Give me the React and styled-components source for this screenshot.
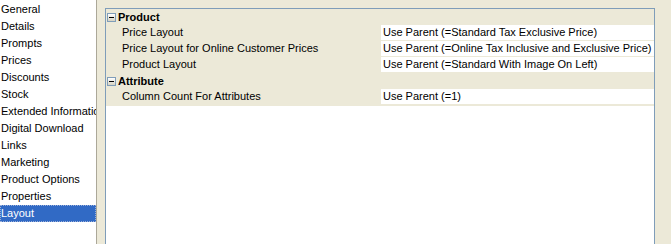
import { createGlobalStyle } from 'styled-components';
import styled from 'styled-components';

const GlobalStyle = createGlobalStyle`
  html, body {
    margin: 0;
    padding: 0;
    background: #ece9d8;
  }
  body {
    font-family: Tahoma, "Liberation Sans", "DejaVu Sans", sans-serif;
    font-size: 11px;
    color: #000;
  }
`;

const tabs = [
  'General',
  'Details',
  'Prompts',
  'Prices',
  'Discounts',
  'Stock',
  'Extended Information',
  'Digital Download',
  'Links',
  'Marketing',
  'Product Options',
  'Properties',
  'Layout',
];

const groups = [
  {
    name: 'Product',
    props: [
      { label: 'Price Layout', value: 'Use Parent (=Standard Tax Exclusive Price)' },
      {
        label: 'Price Layout for Online Customer Prices',
        value: 'Use Parent (=Online Tax Inclusive and Exclusive Price)',
      },
      { label: 'Product Layout', value: 'Use Parent (=Standard With Image On Left)' },
    ],
  },
  {
    name: 'Attribute',
    props: [{ label: 'Column Count For Attributes', value: 'Use Parent (=1)' }],
  },
];

function App() {
  const selected = 'Layout';

  return (
    <>
      <GlobalStyle />
      <Window>
        <TabList>
          {tabs.map(tab => (
            <TabItem key={tab} $active={tab === selected}>
              {tab}
            </TabItem>
          ))}
        </TabList>
        <Gutter />
        <PropertyGrid>
          {groups.map(group => (
            <div key={group.name}>
              <CategoryRow>
                <CollapseBox />
                <span>{group.name}</span>
              </CategoryRow>
              {group.props.map(({ label, value }) => (
                <PropertyRow key={label}>
                  <LabelCell>{label}</LabelCell>
                  <ValueCell>{value}</ValueCell>
                </PropertyRow>
              ))}
            </div>
          ))}
          <EmptyArea />
        </PropertyGrid>
      </Window>
    </>
  );
}

const Window = styled.div`
  display: flex;
  height: 244px;
  width: 671px;
  overflow: hidden;
`;

const TabList = styled.ul`
  list-style: none;
  margin: 0;
  padding: 1px 0 0 0;
  width: 97px;
  flex-shrink: 0;
  background: #fff;
  border-right: 1px solid #aca899;
  box-sizing: border-box;
`;

const TabItem = styled.li`
  height: 17px;
  line-height: 17px;
  padding-left: 1px;
  white-space: nowrap;
  overflow: hidden;
  box-sizing: border-box;
  background: ${p => (p.$active ? '#316ac5' : 'transparent')};
  color: ${p => (p.$active ? '#fff' : '#000')};
  outline: ${p => (p.$active ? '1px dotted #9cb0d8' : 'none')};
  outline-offset: -1px;
`;

const Gutter = styled.div`
  width: 8px;
  flex-shrink: 0;
`;

const PropertyGrid = styled.div`
  display: flex;
  flex-direction: column;
  margin-top: 8px;
  margin-right: 18px;
  width: 548px;
  flex-shrink: 0;
  border: 1px solid #7f9db9;
  border-bottom: none;
  background: #ece9d8;
`;

const CategoryRow = styled.div`
  display: flex;
  align-items: center;
  height: 16px;
  padding-left: 1px;
  font-weight: bold;
  gap: 2px;
`;

const CollapseBox = styled.span`
  position: relative;
  width: 9px;
  height: 9px;
  box-sizing: border-box;
  border: 1px solid #7f9db9;
  background: linear-gradient(#ffffff, #d6d2c2);
  &::after {
    content: '';
    position: absolute;
    left: 1px;
    right: 1px;
    top: 3px;
    height: 1px;
    background: #000;
  }
`;

const PropertyRow = styled.div`
  display: flex;
  height: 16px;
`;

const LabelCell = styled.div`
  width: 275px;
  flex-shrink: 0;
  padding-left: 16px;
  box-sizing: border-box;
  line-height: 15px;
  white-space: nowrap;
  overflow: hidden;
`;

const ValueCell = styled.div`
  flex: 1;
  background: #fff;
  height: 15px;
  line-height: 15px;
  padding-left: 2px;
  white-space: nowrap;
  overflow: hidden;
`;

const EmptyArea = styled.div`
  flex: 1;
  background: #fff;
  border-top: 1px solid #ece9d8;
`;

export default App;
